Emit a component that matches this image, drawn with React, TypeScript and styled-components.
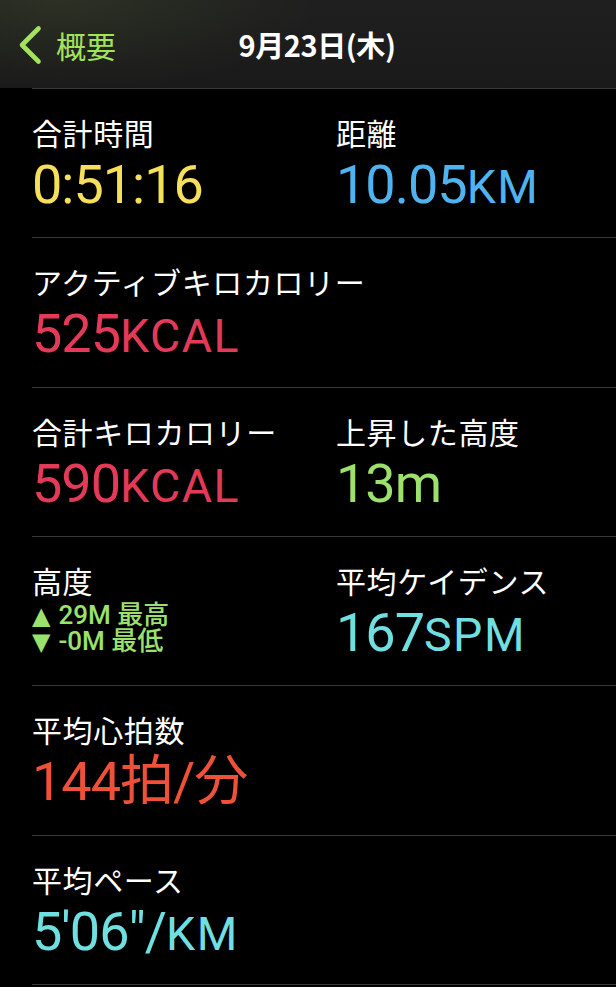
import * as React from 'react';
import styled, { createGlobalStyle } from 'styled-components';

const GlobalStyle = createGlobalStyle`
  body {
    margin: 0;
    background: #000;
    font-family: 'Noto Sans CJK JP', 'Noto Sans', sans-serif;
    -webkit-font-smoothing: antialiased;
  }
`;

/** Palette taken from the activity summary */
const colors = {
  tint: '#a3e35a',
  yellow: '#f6e05a',
  blue: '#4fb3ef',
  red: '#e33a58',
  green: '#9de16d',
  teal: '#70dfe0',
  orange: '#ee5138',
  separator: '#38383a',
};

/** Navigation bar */
const NavBar = styled.header`
  display: grid;
  grid-template-columns: 1fr auto 1fr;
  align-items: center;
  height: 88px;
  background:
    radial-gradient(ellipse 260px 90px at 60px 0px, rgba(110, 140, 60, 0.16), transparent),
    linear-gradient(180deg, #1f1f1f 0%, #1a1a1a 100%);
`;

const BackButton = styled.a`
  display: flex;
  align-items: center;
  gap: 14px;
  padding: 2px 0 0 18px;
  color: ${colors.tint};
  font-size: 30px;
  line-height: 36px;
  text-decoration: none;

  svg {
    flex-shrink: 0;
  }
`;

const Title = styled.h1`
  margin: 0;
  padding-left: 18px;
  color: #fff;
  font-size: 29px;
  font-weight: 700;
  letter-spacing: -0.4px;
`;

/** Metric list */
const List = styled.ul`
  list-style: none;
  margin: 0 0 0 32px;
  padding: 0;
  border-top: 1px solid ${colors.separator};
`;

const Row = styled.li`
  display: grid;
  grid-template-columns: 304px 1fr;
  box-sizing: border-box;
  height: 149.33px;
  padding-top: 25px;
  border-bottom: 1px solid ${colors.separator};
`;

const Metric = styled.div`
  display: flex;
  flex-direction: column;
  min-width: 0;
`;

const Label = styled.div`
  color: #fff;
  font-size: 30px;
  line-height: 36px;
  letter-spacing: 0.6px;
  white-space: nowrap;
`;

const Value = styled.div<{ $color: string }>`
  margin-top: 8px;
  color: ${(p) => p.$color};
  font-family: Roboto, 'Noto Sans CJK JP', sans-serif;
  font-size: 54px;
  line-height: 54px;
  letter-spacing: -1px;
  white-space: nowrap;
`;

const Unit = styled.span`
  font-size: 0.86em;
  letter-spacing: 1.5px;
`;

const Extremes = styled.div`
  margin-top: 5px;
  color: ${colors.green};
  font-family: Roboto, 'Noto Sans CJK JP', sans-serif;
  font-size: 26px;
  line-height: 25px;
  font-weight: 500;
`;

const Extreme = styled.div`
  display: flex;
  align-items: baseline;
  gap: 8px;
  white-space: nowrap;
`;

const Arrow = styled.span`
  font-family: 'DejaVu Sans', sans-serif;
  font-size: 24px;
`;

interface IMetric {
  label: string;
  value?: string;
  unit?: string;
  color?: string;
  extremes?: { arrow: string; text: string }[];
}

const rows: IMetric[][] = [
  [
    { label: '合計時間', value: '0:51:16', color: colors.yellow },
    { label: '距離', value: '10.05', unit: 'KM', color: colors.blue },
  ],
  [{ label: 'アクティブキロカロリー', value: '525', unit: 'KCAL', color: colors.red }],
  [
    { label: '合計キロカロリー', value: '590', unit: 'KCAL', color: colors.red },
    { label: '上昇した高度', value: '13m', color: colors.green },
  ],
  [
    {
      label: '高度',
      extremes: [
        { arrow: '▲', text: '29M 最高' },
        { arrow: '▼', text: '-0M 最低' },
      ],
    },
    { label: '平均ケイデンス', value: '167', unit: 'SPM', color: colors.teal },
  ],
  [{ label: '平均心拍数', value: '144拍/分', color: colors.orange }],
  [{ label: '平均ペース', value: '5\'06"/', unit: 'KM', color: colors.teal }],
];

const Chevron: React.FC = () => (
  <svg width="24" height="40" viewBox="0 0 24 40" fill="none">
    <path
      d="M20.5 3.5 L4 20 L20.5 36.5"
      stroke={colors.tint}
      strokeWidth="4.6"
      strokeLinecap="round"
      strokeLinejoin="round"
    />
  </svg>
);

const MetricCell: React.FC<{ metric: IMetric }> = ({ metric }) => (
  <Metric>
    <Label>{metric.label}</Label>
    {metric.value && (
      <Value $color={metric.color || '#fff'}>
        {metric.value}
        {metric.unit && <Unit>{metric.unit}</Unit>}
      </Value>
    )}
    {metric.extremes && (
      <Extremes>
        {metric.extremes.map((line) => (
          <Extreme key={line.text}>
            <Arrow>{line.arrow}</Arrow>
            <span>{line.text}</span>
          </Extreme>
        ))}
      </Extremes>
    )}
  </Metric>
);

const App: React.FC = () => (
  <>
    <GlobalStyle />
    <NavBar>
      <BackButton href="#back">
        <Chevron />
        <span>概要</span>
      </BackButton>
      <Title>9月23日(木)</Title>
      <div />
    </NavBar>
    <List>
      {rows.map((row, i) => (
        <Row key={i}>
          {row.map((metric) => (
            <MetricCell key={metric.label} metric={metric} />
          ))}
        </Row>
      ))}
    </List>
  </>
);

export default App;
